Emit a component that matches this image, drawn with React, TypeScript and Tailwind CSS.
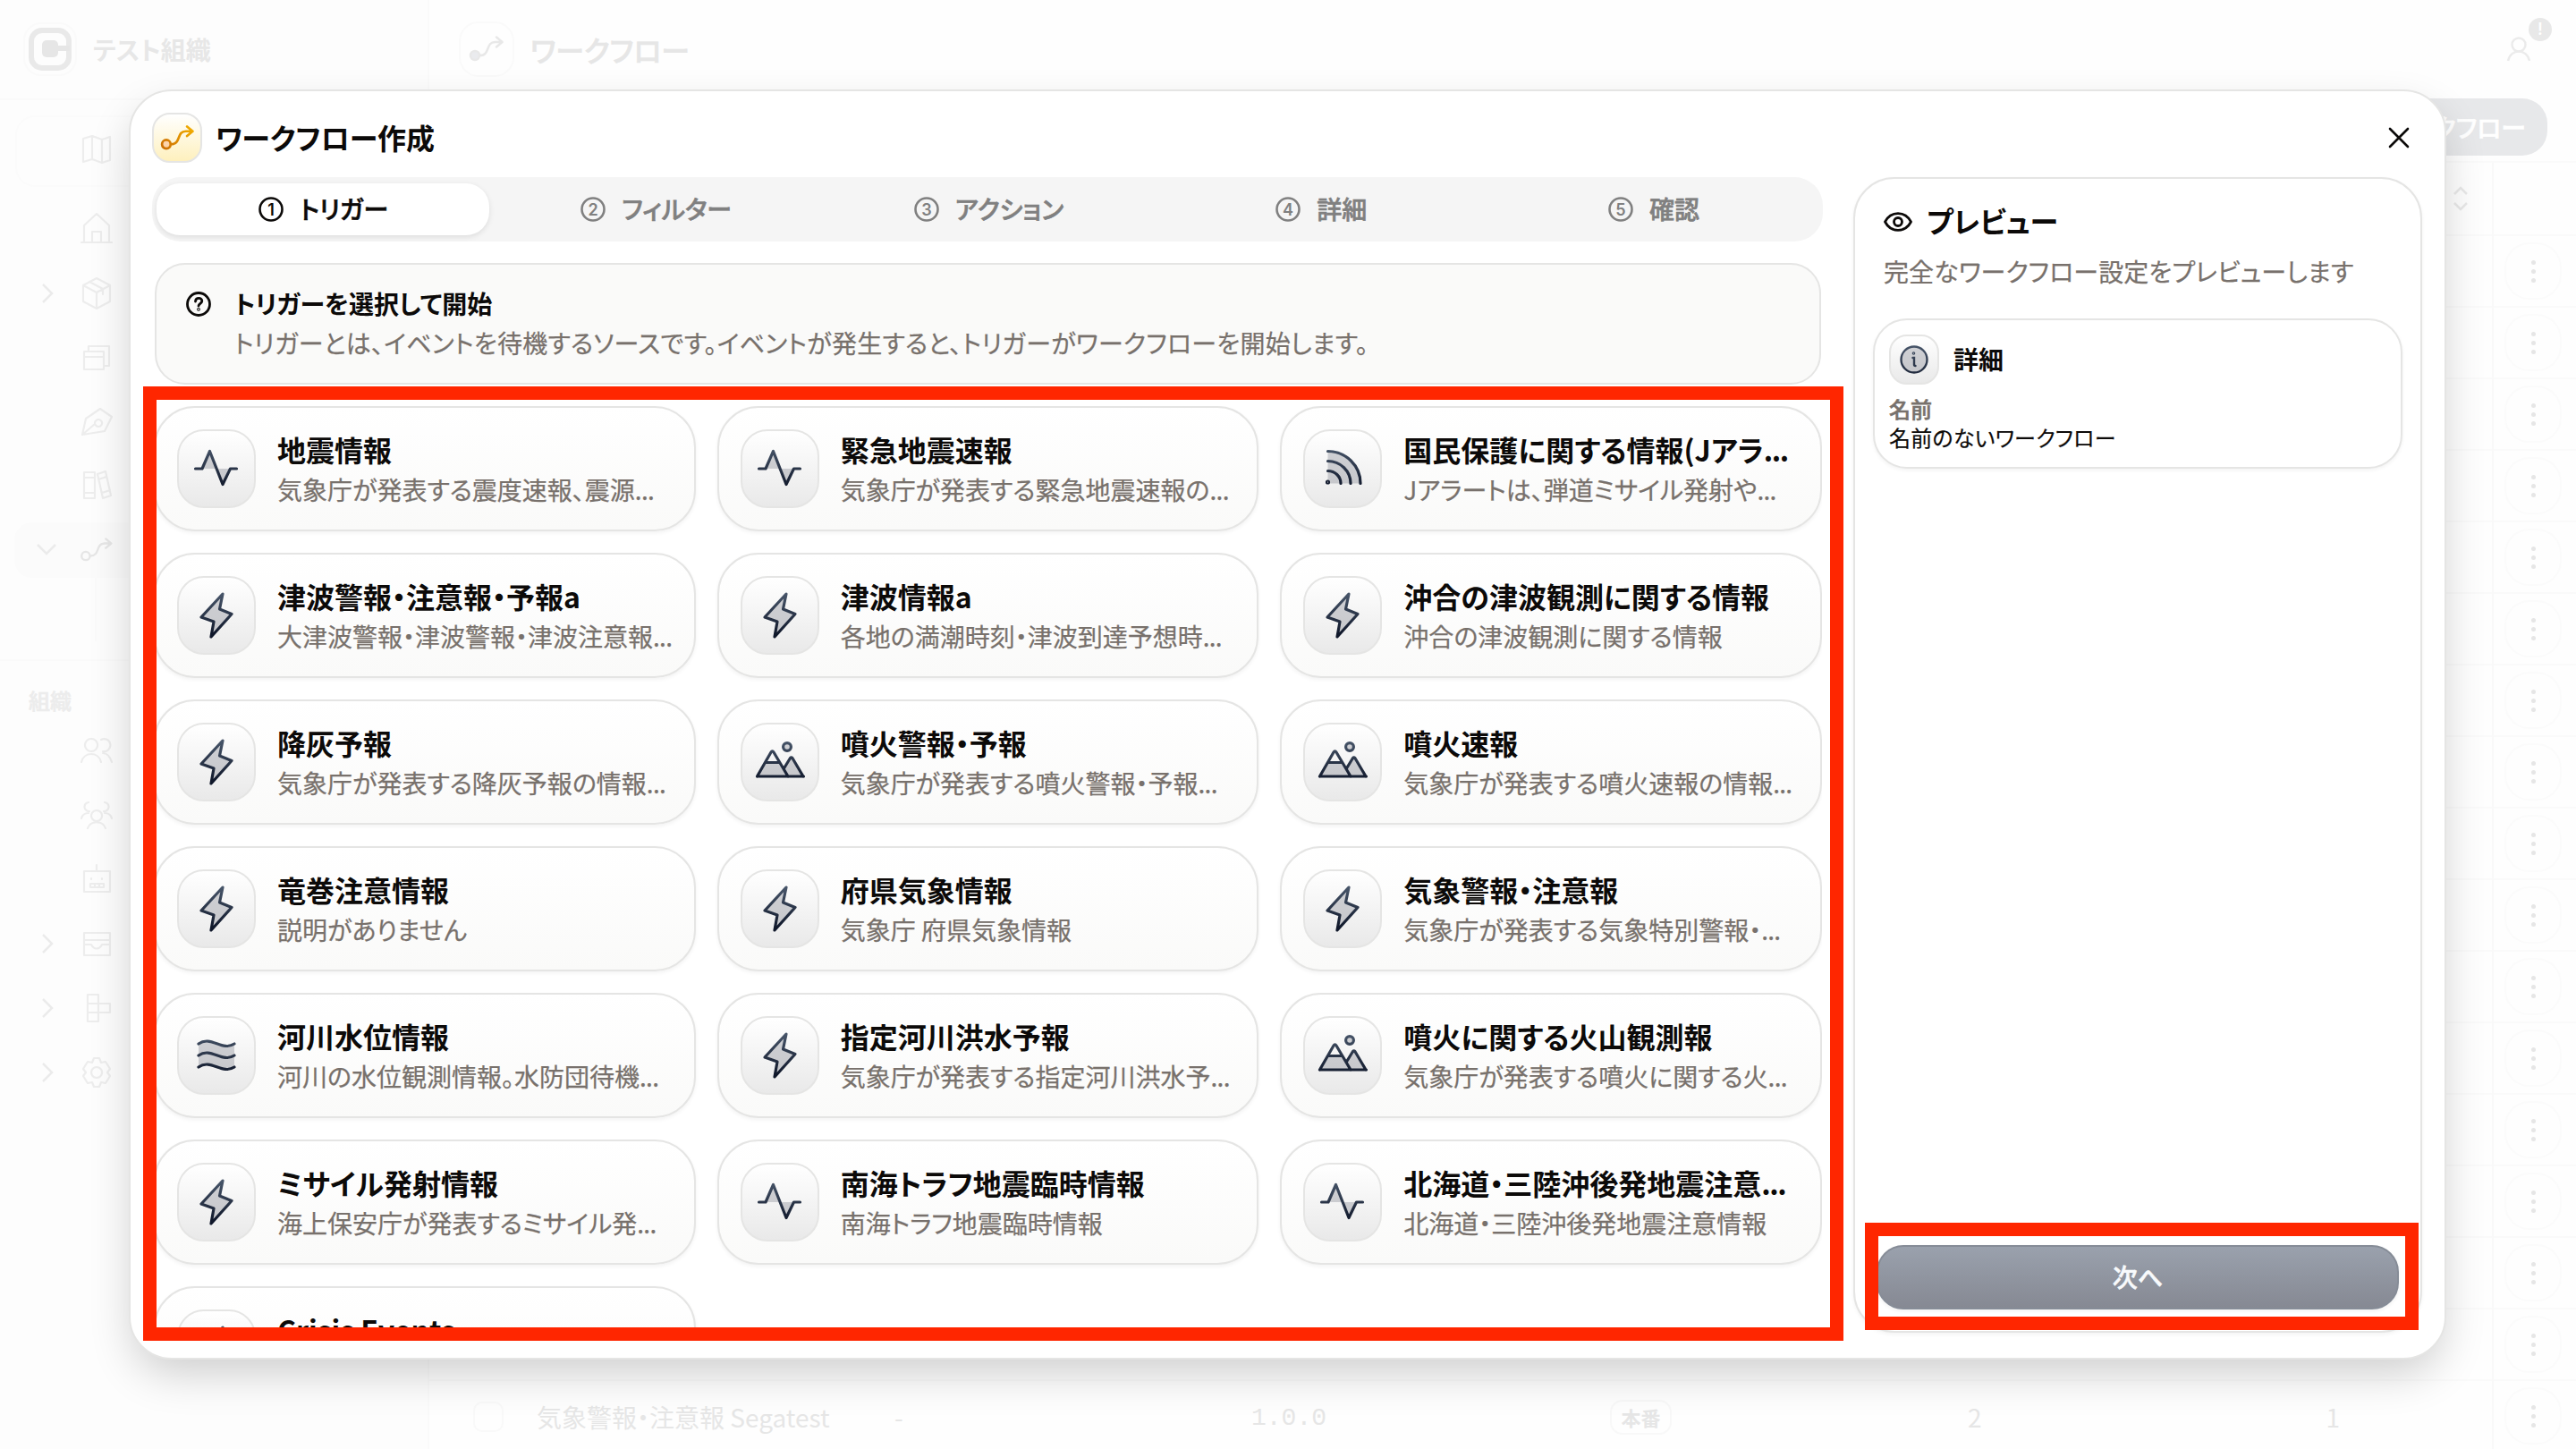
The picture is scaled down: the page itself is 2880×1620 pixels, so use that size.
import { clsx } from "clsx";
import type { ReactNode } from "react";

type IconName = "activity" | "bolt" | "rss" | "mountain" | "waves";

type Trigger = { icon: IconName; title: string; text: string };

const triggers: Trigger[] = [
  { icon: "activity", title: "地震情報", text: "気象庁が発表する震度速報、震源..." },
  { icon: "activity", title: "緊急地震速報", text: "気象庁が発表する緊急地震速報の..." },
  { icon: "rss", title: "国民保護に関する情報(Jアラ...", text: "Jアラートは、弾道ミサイル発射や..." },
  { icon: "bolt", title: "津波警報・注意報・予報a", text: "大津波警報・津波警報・津波注意報..." },
  { icon: "bolt", title: "津波情報a", text: "各地の満潮時刻・津波到達予想時..." },
  { icon: "bolt", title: "沖合の津波観測に関する情報", text: "沖合の津波観測に関する情報" },
  { icon: "bolt", title: "降灰予報", text: "気象庁が発表する降灰予報の情報..." },
  { icon: "mountain", title: "噴火警報・予報", text: "気象庁が発表する噴火警報・予報..." },
  { icon: "mountain", title: "噴火速報", text: "気象庁が発表する噴火速報の情報..." },
  { icon: "bolt", title: "竜巻注意情報", text: "説明がありません" },
  { icon: "bolt", title: "府県気象情報", text: "気象庁 府県気象情報" },
  { icon: "bolt", title: "気象警報・注意報", text: "気象庁が発表する気象特別警報・..." },
  { icon: "waves", title: "河川水位情報", text: "河川の水位観測情報。水防団待機..." },
  { icon: "bolt", title: "指定河川洪水予報", text: "気象庁が発表する指定河川洪水予..." },
  { icon: "mountain", title: "噴火に関する火山観測報", text: "気象庁が発表する噴火に関する火..." },
  { icon: "bolt", title: "ミサイル発射情報", text: "海上保安庁が発表するミサイル発..." },
  { icon: "activity", title: "南海トラフ地震臨時情報", text: "南海トラフ地震臨時情報" },
  { icon: "activity", title: "北海道・三陸沖後発地震注意...", text: "北海道・三陸沖後発地震注意情報" },
  { icon: "bolt", title: "Crisis Events", text: "" },
];

const steps = ["トリガー", "フィルター", "アクション", "詳細", "確認"];

const iconShapes: Record<IconName, ReactNode> = {
  activity: (
    <>
      <path d="M9 24l7-18 7 18zM24 24h14l-7 17z" fill="#0f172a" fillOpacity={0.18} stroke="none" />
      <path d="M0.5 24H8L16.500 4.500l14.500 37L39.500 24h7" />
    </>
  ),
  bolt: <path d="M31 0L7 26l14 5-3 17 23-25.500L27.500 17z" fill="#0f172a" fillOpacity={0.18} />,
  rss: (
    <>
      <path d="M7.500 4.500c20 0 36.500 16 36.500 36H7.500z" fill="#0f172a" fillOpacity={0.18} stroke="none" />
      <path d="M7.500 4.500c20 0 36.500 16 36.500 36M7.500 15.500c14 0 25.500 11 25.500 25M7.500 26.500c8 0 14.500 6 14.500 14" />
      <circle cx="7.500" cy="39" r="1" />
    </>
  ),
  mountain: (
    <>
      <path d="M9 24h13l7 8 7.700-12.500L50 40H-1z" fill="#0f172a" fillOpacity={0.18} stroke="none" />
      <path d="M-1.500 40L14 13q1.500-2.500 3 0L33 40M-1.500 40h52M28.500 31l7-11.500q1.200-1.500 2.400 0L50 40M8 24.500h15" />
      <circle cx="32" cy="7" r="4.400" fill="#0f172a" fillOpacity={0.18} />
    </>
  ),
  waves: (
    <>
      <path d="M4 11c10-8 20 8 40 0v26c-20 8-30-8-40 0z" fill="#0f172a" fillOpacity={0.18} stroke="none" />
      <path d="M4 11c14-10 26 9 40 0M4 24c14-10 26 9 40 0M4 37c14-10 26 9 40 0" />
    </>
  ),
};

const TriggerIcon = ({ name }: { name: IconName }) => (
  <svg
    viewBox="0 0 48 48"
    className="h-12 w-12 overflow-visible"
    fill="none"
    stroke="url(#ink)"
    strokeWidth={3.2}
    strokeLinecap="round"
    strokeLinejoin="round"
  >
    {iconShapes[name]}
  </svg>
);

const RouteIcon = ({ className }: { className?: string }) => (
  <svg viewBox="0 0 40 30" className={className} fill="none" strokeLinecap="round" strokeLinejoin="round">
    <circle cx="7" cy="22" r="5" fillOpacity={0.2} fill="currentColor" />
    <path d="M12.500 22c12 0 6-15 17-15h7M31 1.500l6.500 5.500-6.500 5.500" />
  </svg>
);

// sets the trailing dots tighter than the rest of the line
const Clipped = ({ value, className }: { value: string; className: string }) => {
  const cut = value.endsWith("...");
  return (
    <>
      {cut ? value.slice(0, -3) : value}
      {cut && <span className={className}>...</span>}
    </>
  );
};

const TriggerCard = ({ icon, title, text }: Trigger) => (
  <div className="flex h-[140px] shrink-0 items-center gap-6 rounded-[46px] border-2 border-[#e5e5e4] bg-linear-to-b from-white to-[#fafaf9] px-6 shadow-[0_2px_4px_rgba(0,0,0,0.05)]">
    <div className="flex h-[88px] w-[88px] shrink-0 items-center justify-center rounded-[30px] border-2 border-[#e5e5e4] bg-linear-to-b from-white to-[#e9e9e9]">
      <TriggerIcon name={icon} />
    </div>
    <div className="min-w-0">
      <p className="h-12 text-[32px] leading-[44px] font-semibold whitespace-nowrap text-[#0c0a09]">
        <Clipped value={title} className="tracking-[-1.5px]" />
      </p>
      <p className="h-10 text-[28px] leading-[38px] whitespace-nowrap text-[#78716c] [-webkit-text-stroke:0.25px]">
        <Clipped value={text} className="tracking-[-0.7px]" />
      </p>
    </div>
  </div>
);

const side = [
  { y: "mt-7", d: "M1 34h34M4 34V15L18 2l14 13v19M13 34V22h10v12" },
  { y: "mt-[37px]", d: "M18 1l15 8v18l-15 8-15-8V9zM3 9l15 8 15-8M18 17v18M10 5l15 8v6", chevron: true },
  { y: "mt-9", d: "M4 11h22v20H4zM4 17h22M9 11V5h23v22h-6" },
  { y: "mt-[35px]", d: "M2 33L6 15 22 4l13 9-8 16zM2 33l14-12M20 16a4 4 0 1 0 .1 0" },
  { y: "mt-9", d: "M4 3h12v29H4zM4 9h12M4 26h12M19 5l9-3 6 27-9 3zM20 11l9-3M24 26l9-3" },
];

const sideLower = [
  { d: "M12 5a7 7 0 1 0 .1 0M1 31c3-12 19-12 22 0M23 6a7 7 0 1 1 2 13M25 21c5 0 8 4 10 10" },
  { d: "M18 13a6 6 0 1 0 .1 0M8 33c3-9 17-9 20 0M9 4a5 5 0 1 0 1 10M1 22c1-4 4-6 8-6M27 4a5 5 0 1 1-1 10M35 22c-1-4-4-6-8-6" },
  { d: "M4 9h29v23H4zM18 9V2M12 17v1M24 17v1M11 23h15v4H11zM16 23v4M21 23v4" },
  { d: "M4 6h29v25H4zM4 14h29M4 19h8c3 6 9 6 12 0h9", chevron: true },
  { d: "M8 3h12v10H8zM8 23h12v10H8zM20 13h13v10H20zM8 13h12v10H8z", chevron: true },
  { d: "M15 2h6l2 5 5-1 5 8-3 4 3 4-5 8-5-1-2 5h-6l-2-5-5 1-5-8 3-4-3-4 5-8 5 1zM18 12a6 6 0 1 0 .1 0", chevron: true },
];

const SideItem = ({ d, chevron, className }: { d: string; chevron?: boolean; className?: string }) => (
  <div className={clsx("flex h-9 items-center pl-[42px]", className)}>
    <svg viewBox="0 0 22 28" className="mr-[26px] h-7 w-[22px]" fill="none" stroke={chevron ? "#ebebeb" : "none"} strokeWidth="2.500">
      <path d="M6 4l10 10L6 24" />
    </svg>
    <svg viewBox="0 0 36 36" className="h-9 w-9" fill="none" stroke="#ededed" strokeWidth="2.200" strokeLinejoin="round" strokeLinecap="round">
      <path d={d} />
    </svg>
  </div>
);

const Sidebar = () => (
  <aside className="h-full w-[480px] shrink-0 border-r-2 border-[#fafafa] bg-[#fdfdfd]">
    <div className="flex h-28 items-center gap-[18px] border-b-2 border-[#fafafa] pl-[26px]">
      <div className="flex h-[60px] w-[60px] items-center justify-center rounded-[20px] border-2 border-[#fafafa]">
        <svg viewBox="0 0 48 48" className="h-12 w-12">
          <rect x="3" y="3" width="42" height="42" rx="12" fill="none" stroke="#e9e9e9" strokeWidth="6" />
          <rect x="15" y="14" width="18" height="19" rx="5" fill="#e6e6e6" />
          <path d="M30 20h16v6H30z" fill="#e6e6e6" />
        </svg>
      </div>
      <span className="text-[28px] font-semibold text-[#e7e7e7]">テスト組織</span>
    </div>
    <div className="mt-[17px] ml-[17px] flex h-20 items-center rounded-[22px] border-2 border-[#fbfbfb]">
      <SideItem d="M3 4l10-3 11 4 9-3v26l-9 3-11-4-10 3zM13 1v26M24 5v26" className="-ml-[19px]" />
    </div>
    {side.map((item) => (
      <SideItem key={item.d} d={item.d} chevron={item.chevron} className={item.y} />
    ))}
    <div className="mt-[23px] ml-4 flex h-[62px] items-center rounded-[20px] bg-[#fbfbfb] pl-[25px]">
      <svg viewBox="0 0 22 14" className="mr-[26px] h-[14px] w-[22px]" fill="none" stroke="#ebebeb" strokeWidth="2.500">
        <path d="M1 1l10 10L21 1" />
      </svg>
      <RouteIcon className="h-[28px] w-[38px] stroke-[#e6e6e6] stroke-[2.500] text-transparent" />
    </div>
    <div className="ml-[106px] h-[71px] w-0.5 bg-[#fafafa]" />
    <div className="mt-5 h-0.5 bg-[#fafafa]" />
    <p className="mt-6 pl-8 text-2xl leading-10 font-medium text-[#ececec] [-webkit-text-stroke:0.6px]">組織</p>
    <div className="mt-[18px] flex flex-col gap-9">
      {sideLower.map((item) => (
        <SideItem key={item.d} d={item.d} chevron={item.chevron} />
      ))}
    </div>
  </aside>
);

const Kebab = () => (
  <div className="flex h-20 items-center justify-center border-b-2 border-[#fafafa] pr-1">
    <div className="flex h-16 w-16 flex-col items-center justify-center gap-[5px] rounded-[28px] border-2 border-[#fbfbfb]">
      <i className="h-[5px] w-[5px] rounded-full bg-[#e6e6e6]" />
      <i className="h-[5px] w-[5px] rounded-full bg-[#e6e6e6]" />
      <i className="h-[5px] w-[5px] rounded-full bg-[#e6e6e6]" />
    </div>
  </div>
);

const Backdrop = () => (
  <div className="flex h-full w-full">
    <Sidebar />
    <div className="flex min-w-0 grow flex-col bg-[#fefefe]">
      <div className="flex h-[110px] shrink-0 items-center pr-[36px] pl-[33px]">
        <div className="flex h-[62px] w-[62px] items-center justify-center rounded-[22px] border-2 border-[#fafafa]">
          <RouteIcon className="h-[30px] w-[42px] stroke-[#e8e8e8] stroke-[2.500] text-gray-400" />
        </div>
        <span className="ml-[18px] text-[32px] font-medium text-[#e6e6e6] [-webkit-text-stroke:0.6px]">ワークフロー</span>
        <div className="relative ml-auto flex h-14 w-14 items-center justify-center rounded-full">
          <svg viewBox="0 0 28 28" className="h-7 w-7" fill="none" stroke="#ebebeb" strokeWidth="2.500">
            <circle cx="14" cy="9" r="7.500" />
            <path d="M2 27c3-14 21-14 24 0" />
          </svg>
          <span className="absolute top-[-7px] right-[-9px] flex h-[26px] w-[26px] items-center justify-center rounded-full bg-[#e8e8e8] font-['Inter'] text-lg font-semibold text-white">!</span>
        </div>
      </div>
      <div className="flex h-[72px] shrink-0 items-start justify-end border-b-2 border-[#fafafa] pr-8">
        <div className="flex h-16 items-center rounded-[28px] bg-[#e7e8ea] px-6 text-[28px] font-medium text-white [-webkit-text-stroke:0.6px]">
          新しいワークフロー
        </div>
      </div>
      <div className="flex grow">
        <div className="flex min-w-0 grow flex-col border-r-2 border-[#f9f9f9]">
          <div className="flex h-[82px] shrink-0 items-center justify-end border-b-2 border-[#fafafa] pr-[27px]">
            <svg viewBox="0 0 16 28" className="h-7 w-4" fill="none" stroke="#e9e9e9" strokeWidth="2.500">
              <path d="M1 9l7-7 7 7M1 19l7 7 7-7" />
            </svg>
          </div>
          {Array.from({ length: 16 }, (_, i) => (
            <div key={i} className="h-20 shrink-0 border-b-2 border-[#fafafa]" />
          ))}
          <div className="flex h-20 shrink-0 items-center text-[28px] text-[#e6e6e6]">
            <div className="ml-[49px] h-[34px] w-[34px] rounded-[10px] border-2 border-[#f9f9f9]" />
            <span className="ml-[37px] w-[400px]">気象警報・注意報 Segatest</span>
            <span className="w-[399px]">-</span>
            <span className="w-[401px] pt-1 font-['Liberation_Mono']">1.0.0</span>
            <span className="flex h-[39px] w-[69px] items-center justify-center rounded-[14px] border-2 border-[#f8f8f8] text-[22px] leading-8 font-semibold">本番</span>
            <span className="ml-[331px]">2</span>
            <span className="ml-[385px]">1</span>
          </div>
        </div>
        <div className="w-[92px] shrink-0">
          <div className="h-[82px] border-b-2 border-[#fafafa]" />
          {Array.from({ length: 17 }, (_, i) => (
            <Kebab key={i} />
          ))}
        </div>
      </div>
    </div>
  </div>
);

const StepBadge = ({ n }: { n: number }) => (
  <svg viewBox="0 0 32 32" className="h-8 w-8 [-webkit-text-stroke:0]">
    <circle cx="16" cy="16" r="12.500" fill="none" stroke="currentColor" strokeWidth="2.600" />
    <text x="16" y="22.500" textAnchor="middle" fontSize="18" fontWeight="600" fontFamily="Inter" fill="currentColor">
      {n}
    </text>
  </svg>
);

const Steps = () => (
  <div className="flex h-[72px] shrink-0 items-center rounded-[32px] bg-[#f5f5f5] pr-1 pl-[5px]">
    {steps.map((label, i) => (
      <div
        key={label}
        className={clsx(
          "flex h-[58px] flex-1 items-center justify-center gap-4 text-[28px] font-medium [-webkit-text-stroke:0.6px]",
          i === 0 ? "rounded-[26px] bg-white text-[#0c0a09] shadow-[0_2px_6px_rgba(0,0,0,0.1)]" : "text-[#808080]",
        )}
      >
        <StepBadge n={i + 1} />
        <span className="pb-0.5">{label}</span>
      </div>
    ))}
  </div>
);

const Notice = () => (
  <div className="mr-0.5 ml-[3px] mt-6 flex h-[136px] shrink-0 rounded-[34px] border-2 border-[#e5e5e4] bg-[#fafaf9] pt-[23px] pl-[31px]">
    <svg viewBox="0 0 32 32" className="mt-[5px] h-8 w-8" fill="none" stroke="#0c0a09" strokeWidth="2.800" strokeLinecap="round" strokeLinejoin="round">
      <circle cx="16" cy="16" r="12.500" />
      <path d="M12.500 13c.3-5 7.500-4.500 7.300-.3-.2 2.600-3.600 2.700-3.800 5.300" />
      <circle cx="16" cy="21.800" r="0.500" />
    </svg>
    <div className="ml-6">
      <p className="text-[28px] leading-10 font-semibold text-[#0c0a09]">トリガーを選択して開始</p>
      <p className="mt-1 text-[28px] leading-10 tracking-[0.25px] text-[#78716c] [-webkit-text-stroke:0.25px]">
        トリガーとは、イベントを待機するソースです。イベントが発生すると、トリガーがワークフローを開始します。
      </p>
    </div>
  </div>
);

const Preview = () => (
  <div className="flex h-[1292px] w-[636px] flex-col rounded-[46px] border-2 border-[#e5e5e4] bg-white px-5 pb-6 shadow-[0_2px_4px_rgba(0,0,0,0.05)]">
    <div className="mt-6 flex h-12 items-center pl-3">
      <svg viewBox="0 0 32 32" className="h-8 w-8" fill="none" stroke="#0c0a09" strokeWidth="2.800">
        <path d="M1.500 16C8 3.500 24 3.500 30.500 16 24 28.500 8 28.500 1.500 16z" strokeLinejoin="round" />
        <circle cx="16" cy="16" r="4.500" />
      </svg>
      <h2 className="ml-4 pb-1 text-[32px] leading-[44px] font-semibold text-[#0c0a09]">プレビュー</h2>
    </div>
    <p className="mt-[11px] pl-3 text-[28px] leading-10 tracking-[0.1px] text-[#78716c] [-webkit-text-stroke:0.25px]">完全なワークフロー設定をプレビューします</p>
    <div className="mt-[33px] h-[168px] rounded-[38px] border-2 border-[#e5e5e4] bg-white p-4 shadow-[0_2px_4px_rgba(0,0,0,0.05)]">
      <div className="flex items-center gap-4">
        <div className="flex h-14 w-14 items-center justify-center rounded-[20px] border-2 border-[#e5e5e4] bg-linear-to-b from-white to-[#e9e9e9]">
          <svg viewBox="0 0 32 32" className="h-8 w-8" fill="none" stroke="url(#ink)" strokeWidth="2.400" strokeLinecap="round">
            <circle cx="16" cy="16" r="14.500" fill="#0f172a" fillOpacity={0.18} />
            <path d="M14.500 14h1.500v7.500q0 1.500 1.500 1.500" />
            <circle cx="15.500" cy="9" r="0.600" />
          </svg>
        </div>
        <h3 className="pb-0.5 text-[28px] font-semibold text-[#0c0a09]">詳細</h3>
      </div>
      <p className="mt-[11px] text-2xl leading-8 font-medium text-[#78716c] [-webkit-text-stroke:0.6px]">名前</p>
      <p className="text-2xl leading-8 tracking-[0.25px] text-[#0c0a09] [-webkit-text-stroke:0.2px]">名前のないワークフロー</p>
    </div>
    <button className="mx-1 mt-auto h-[72px] rounded-[30px] border-2 border-[#868c97] bg-linear-to-b from-[#9aa1ad] to-[#868993] pb-0.5 text-[28px] font-medium text-[#f8fafc] shadow-[0_2px_4px_rgba(0,0,0,0.06)] [-webkit-text-stroke:0.6px]">
      次へ
    </button>
  </div>
);

const Dialog = () => (
  <div className="absolute top-[100px] left-[144px] flex h-[1420px] w-[2591px] flex-col rounded-[48px] border-2 border-[#e5e5e4] bg-white pt-6 pr-[25px] pl-6 shadow-[0_20px_50px_-6px_rgba(0,0,0,0.2)]">
    <header className="flex h-14 shrink-0 items-center">
      <div className="flex h-14 w-14 items-center justify-center rounded-[20px] border-2 border-[#e5e5e4] bg-linear-to-b from-white to-[#fef0bd]">
        <RouteIcon className="h-[29px] w-[39px] stroke-[url(#amber)] stroke-[2.800] text-orange-600" />
      </div>
      <h1 className="ml-[15px] pb-[3px] text-[32px] font-semibold text-[#0c0a09]">ワークフロー作成</h1>
      <svg viewBox="0 0 24 24" className="mr-[14px] ml-auto h-6 w-6" stroke="#0c0a09" strokeWidth="2.600" strokeLinecap="round">
        <path d="M2 2l20 20M22 2L2 22" />
      </svg>
    </header>
    <div className="mt-4 flex justify-between">
      <div className="flex w-[1868px] flex-col">
        <Steps />
        <Notice />
        <div className="mt-6 mr-px ml-0.5 grid h-[1034px] grid-cols-3 content-start gap-6 overflow-hidden">
          {triggers.map((t) => (
            <TriggerCard key={t.title} {...t} />
          ))}
        </div>
      </div>
      <Preview />
    </div>
  </div>
);

const App = () => (
  <div className="relative h-[1620px] w-[2880px] overflow-hidden bg-white font-['Noto_Sans_CJK_JP',sans-serif] [font-feature-settings:'palt']" lang="ja">
    <svg className="absolute h-0 w-0">
      <defs>
        <linearGradient id="ink" gradientUnits="userSpaceOnUse" x1="0" y1="0" x2="0" y2="46">
          <stop stopColor="#475569" />
          <stop offset="1" stopColor="#0f172a" />
        </linearGradient>
        <linearGradient id="amber" gradientUnits="userSpaceOnUse" x1="0" y1="28" x2="40" y2="0">
          <stop stopColor="#c96a04" />
          <stop offset="1" stopColor="#f5b301" />
        </linearGradient>
      </defs>
    </svg>
    <Backdrop />
    <Dialog />
    <div className="absolute top-[432px] left-[160px] h-[1067px] w-[1901px] border-[15px] border-[#ff2600]" />
    <div className="absolute top-[1367px] left-[2085px] h-[120px] w-[619px] border-[15px] border-[#ff2600]" />
  </div>
);

export default App;
